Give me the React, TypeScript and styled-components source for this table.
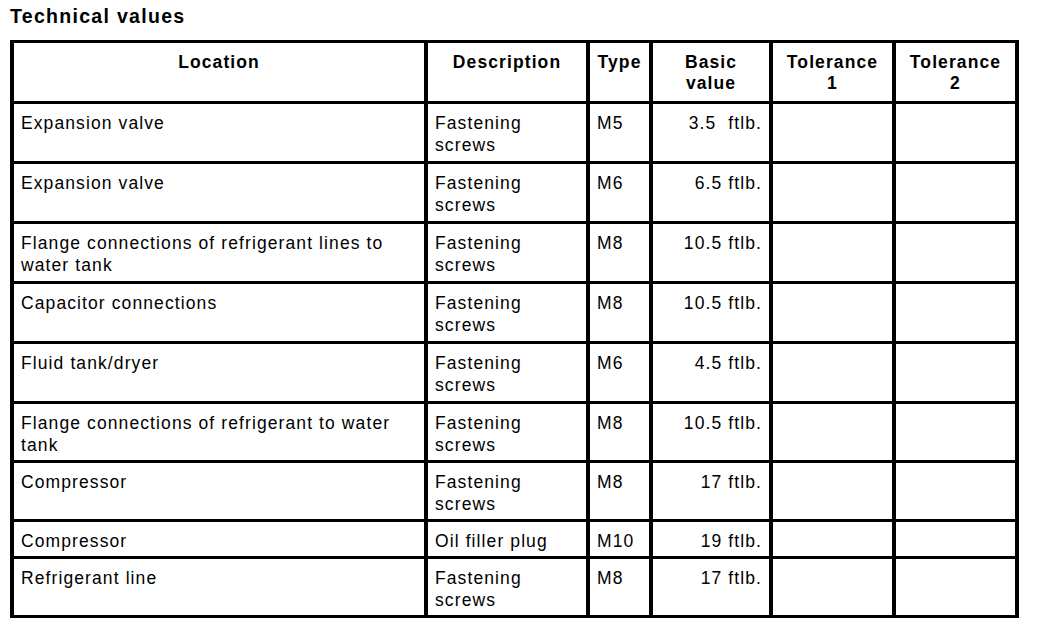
import React from 'react';
import styled, { createGlobalStyle } from 'styled-components';

const GlobalStyle = createGlobalStyle`
    html, body {
        margin: 0;
        padding: 0;
        background: #ffffff;
    }

    body {
        font-family: "Liberation Sans", Arial, sans-serif;
        color: #000000;
    }
`;

const Page = styled.div`
    padding: 5px 0 0 10px;
    width: 1009px;
`;

const Title = styled.h1`
    margin: 0 0 13px 0;
    font-size: 19.5px;
    line-height: 22px;
    font-weight: bold;
    letter-spacing: 1.3px;
`;

const Grid = styled.div`
    display: grid;
    grid-template-columns: 410px 158px 59px 116px 119px 119px;
    grid-template-rows: 58px repeat(5, 57px) 56px 56px 34px 56px;
    column-gap: 4px;
    row-gap: 3px;
    padding: 3px 4px;
    background: #000000;
    width: max-content;
`;

const HeadCell = styled.div`
    background: #ffffff;
    padding: 9px 4px 0 4px;
    font-size: 17.5px;
    line-height: 21px;
    font-weight: bold;
    letter-spacing: 1.1px;
    text-align: center;
    white-space: pre-line;
`;

const Cell = styled.div<{ $align?: 'left' | 'right' }>`
    background: #ffffff;
    padding: 8px 7px 0 7px;
    font-size: 17.5px;
    line-height: 22px;
    letter-spacing: 1.1px;
    text-align: ${(p) => p.$align ?? 'left'};
    white-space: ${(p) => (p.$align === 'right' ? 'pre' : 'normal')};
`;

type Row = {
    location: string;
    description: string;
    type: string;
    value: string;
};

const headers = ['Location', 'Description', 'Type', 'Basic\nvalue', 'Tolerance\n1', 'Tolerance\n2'];

const rows: Row[] = [
    { location: 'Expansion valve', description: 'Fastening screws', type: 'M5', value: '3.5  ftlb.' },
    { location: 'Expansion valve', description: 'Fastening screws', type: 'M6', value: '6.5 ftlb.' },
    {
        location: 'Flange connections of refrigerant lines to water tank',
        description: 'Fastening screws',
        type: 'M8',
        value: '10.5 ftlb.',
    },
    { location: 'Capacitor connections', description: 'Fastening screws', type: 'M8', value: '10.5 ftlb.' },
    { location: 'Fluid tank/dryer', description: 'Fastening screws', type: 'M6', value: '4.5 ftlb.' },
    {
        location: 'Flange connections of refrigerant to water tank',
        description: 'Fastening screws',
        type: 'M8',
        value: '10.5 ftlb.',
    },
    { location: 'Compressor', description: 'Fastening screws', type: 'M8', value: '17 ftlb.' },
    { location: 'Compressor', description: 'Oil filler plug', type: 'M10', value: '19 ftlb.' },
    { location: 'Refrigerant line', description: 'Fastening screws', type: 'M8', value: '17 ftlb.' },
];

export default function App() {
    return (
        <>
            <GlobalStyle />
            <Page>
                <Title>Technical values</Title>
                <Grid role="table">
                    {headers.map((h) => (
                        <HeadCell key={h} role="columnheader">
                            {h}
                        </HeadCell>
                    ))}
                    {rows.map((r, i) => (
                        <React.Fragment key={i}>
                            <Cell role="cell">{r.location}</Cell>
                            <Cell role="cell">{r.description}</Cell>
                            <Cell role="cell">{r.type}</Cell>
                            <Cell role="cell" $align="right">
                                {r.value}
                            </Cell>
                            <Cell role="cell" />
                            <Cell role="cell" />
                        </React.Fragment>
                    ))}
                </Grid>
            </Page>
        </>
    );
}
